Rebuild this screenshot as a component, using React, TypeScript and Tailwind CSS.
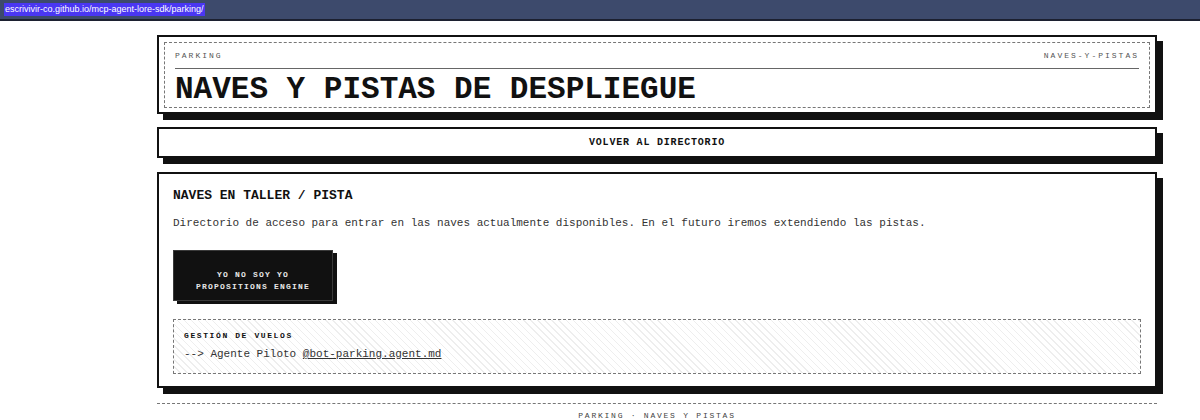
import React from "react";

const mono = "font-['Liberation_Mono','Courier_New',monospace]";

function AddressBar() {
  return (
    <div className="h-[21px] bg-[#3d4a6c] border-b-2 border-[#1c2030] flex items-center px-[4px]">
      <span className="bg-[#4a37f2] text-white text-[9px] leading-[13px] px-[1px] font-['Liberation_Sans',Arial,sans-serif]">
        escrivivir-co.github.io/mcp-agent-lore-sdk/parking/
      </span>
    </div>
  );
}

function Header() {
  return (
    <header className="border-2 border-[#111] bg-white px-[5px] pt-[5px] pb-[4px] shadow-[6px_6px_0_#111]">
      <div className="border border-dashed border-[#777] px-[10px] pt-[8px] pb-[2px]">
        <div className="flex justify-between text-[8px] leading-[10px] tracking-[0.25em] text-[#555] pb-[7px] border-b border-[#666]">
          <span>PARKING</span>
          <span>NAVES-Y-PISTAS</span>
        </div>
        <h1 className="mt-[5px] text-[31px] leading-[31px] font-bold text-[#111]">
          NAVES Y PISTAS DE DESPLIEGUE
        </h1>
      </div>
    </header>
  );
}

function BackLink() {
  return (
    <nav className="mt-[13px] border-2 border-[#111] bg-white shadow-[6px_6px_0_#111] text-center">
      <span className="block text-[10px] leading-[27px] font-bold tracking-[0.08em] text-[#111]">
        VOLVER AL DIRECTORIO
      </span>
    </nav>
  );
}

function ShipButton() {
  return (
    <div className="mt-[19px] flex">
      <div className="w-[160px] h-[51px] bg-[#111] border border-[#3a3a3a] shadow-[4px_3px_0_#111] flex flex-col items-center justify-center pt-[11px] text-[8px] leading-[12px] tracking-[0.15em] font-bold text-[#e6e6e6] text-center">
        <span>YO NO SOY YO</span>
        <span>PROPOSITIONS ENGINE</span>
      </div>
    </div>
  );
}

function FlightDesk() {
  return (
    <div className="mt-[18px] border border-dashed border-[#777] px-[10px] pt-[11px] pb-[11px] bg-[repeating-linear-gradient(45deg,transparent_0_4px,#eeeeee_4px_5px)]">
      <div className="text-[8px] leading-[10px] tracking-[0.2em] font-bold text-[#111]">GESTIÓN DE VUELOS</div>
      <div className="mt-[5px] text-[11px] leading-[16px] text-[#333]">
        --&gt; Agente Piloto <span className="underline">@bot-parking.agent.md</span>
      </div>
    </div>
  );
}

function Hangar() {
  return (
    <section className="mt-[14px] border-2 border-[#111] bg-white shadow-[6px_6px_0_#111] px-[14px] pt-[14px] pb-[12px]">
      <h2 className="text-[13px] leading-[16px] font-bold text-[#111]">NAVES EN TALLER / PISTA</h2>
      <p className="mt-[11px] text-[11px] leading-[16px] text-[#333]">
        Directorio de acceso para entrar en las naves actualmente disponibles. En el futuro iremos extendiendo las pistas.
      </p>
      <ShipButton />
      <FlightDesk />
    </section>
  );
}

function Footer() {
  return (
    <footer className="mt-[15px] border-t border-dashed border-[#777] pt-[7px] text-center text-[8px] leading-[10px] tracking-[0.22em] text-[#444]">
      PARKING · NAVES Y PISTAS
    </footer>
  );
}

export default function App() {
  return (
    <div className="min-h-[420px] bg-white">
      <AddressBar />
      <main className={`ml-[157px] w-[1000px] pt-[14px] ${mono}`}>
        <Header />
        <BackLink />
        <Hangar />
        <Footer />
      </main>
    </div>
  );
}
